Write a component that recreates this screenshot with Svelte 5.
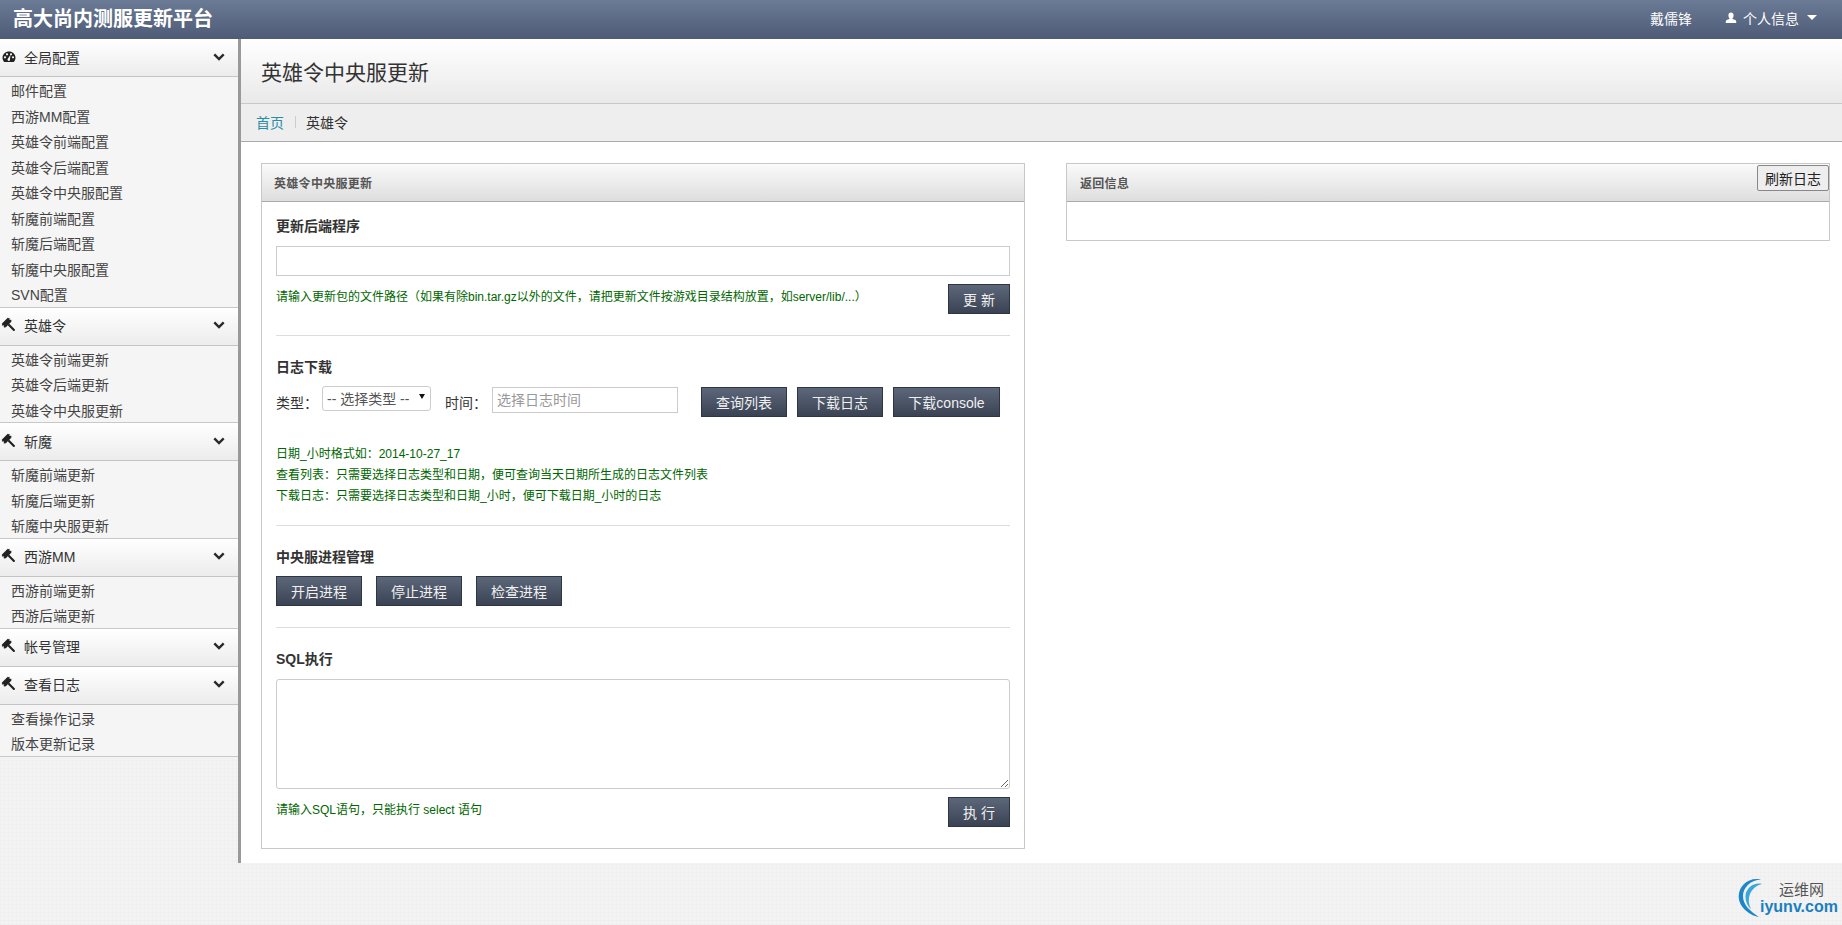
<script>
	const groups = [
		{ title: '全局配置', icon: 'dash', items: ['邮件配置', '西游MM配置', '英雄令前端配置', '英雄令后端配置', '英雄令中央服配置', '斩魔前端配置', '斩魔后端配置', '斩魔中央服配置', 'SVN配置'] },
		{ title: '英雄令', icon: 'gavel', items: ['英雄令前端更新', '英雄令后端更新', '英雄令中央服更新'] },
		{ title: '斩魔', icon: 'gavel', items: ['斩魔前端更新', '斩魔后端更新', '斩魔中央服更新'] },
		{ title: '西游MM', icon: 'gavel', items: ['西游前端更新', '西游后端更新'] },
		{ title: '帐号管理', icon: 'gavel', items: [] },
		{ title: '查看日志', icon: 'gavel', items: ['查看操作记录', '版本更新记录'] }
	];
</script>

<div class="page">
	<header class="topbar">
		<div class="brand">高大尚内测服更新平台</div>
		<div class="user">
			<span class="uname">戴儒锋</span>
			<span class="uinfo">
				<svg class="uicon" viewBox="0 0 12 12" width="12" height="12"><path d="M6 .5c1.600 0 2.600 1.200 2.600 2.900 0 1.200-.5 2.300-1.200 2.900.1.600.5.9 1.500 1.200 1.400.4 2.300.9 2.300 2v1.500H.8V9.500c0-1.100.9-1.600 2.300-2 1-.3 1.400-.6 1.500-1.200-.7-.6-1.200-1.700-1.200-2.900C3.400 1.700 4.400.5 6 .5z" fill="#fff"/></svg>
				个人信息
				<span class="caret"></span>
			</span>
		</div>
	</header>

	<div class="layout">
		<nav class="sidebar">
			{#each groups as g}
				<section class="group">
					<div class="group-head">
						{#if g.icon === 'dash'}
							<svg class="gicon" viewBox="0 0 14 14" width="14" height="14">
								<path fill-rule="evenodd" d="M7 1.500c3.500 0 6.500 2.700 6.500 6.200 0 1.700-.7 3.200-1.800 4.300H2.300C1.200 10.900.5 9.400.5 7.700.5 4.200 3.500 1.500 7 1.500zM3 6.200a1.100 1.100 0 1 0 0 2.200 1.100 1.100 0 0 0 0-2.200zM5 3.200a1.100 1.100 0 1 0 0 2.200 1.100 1.100 0 0 0 0-2.200zM9 3.200a1.100 1.100 0 1 0 0 2.200 1.100 1.100 0 0 0 0-2.200zM11 6.200a1.100 1.100 0 1 0 0 2.200 1.100 1.100 0 0 0 0-2.200zM8.500 4.800 6 8.600a1.300 1.300 0 1 0 2 .5z" fill="#222"/>
							</svg>
						{:else}
							<svg class="gicon" viewBox="0 0 14 14" width="14" height="14">
								<g transform="rotate(-45 7 7)" fill="#222">
									<rect x="2.800" y="1" width="8.400" height="5.400"/>
									<rect x="1.800" y="1.800" width="10.400" height="1.200"/>
									<rect x="1.800" y="4.400" width="10.400" height="1.200"/>
									<rect x="5.900" y="6" width="2.200" height="9" rx="1"/>
								</g>
							</svg>
						{/if}
						<span class="gtitle">{g.title}</span>
						<svg class="chev" viewBox="0 0 12 8" width="12" height="8"><path d="M1.300 1.300 6 6l4.700-4.700" fill="none" stroke="#2a2a2a" stroke-width="2.400"/></svg>
					</div>
					{#if g.items.length}
						<ul class="items">
							{#each g.items as item}
								<li>{item}</li>
							{/each}
						</ul>
					{/if}
				</section>
			{/each}
		</nav>

		<main class="main">
			<div class="title-bar"><h1>英雄令中央服更新</h1></div>
			<div class="crumbs">
				<span class="crumb-link">首页</span>
				<span class="crumb-sep"></span>
				<span>英雄令</span>
			</div>

			<div class="columns">
				<div class="panel">
					<div class="panel-head"><span>英雄令中央服更新</span></div>
					<div class="panel-body">
						<div class="block b-update">
							<h4>更新后端程序</h4>
							<input class="text wide" type="text" />
							<div class="hint-row">
								<p class="hint">请输入更新包的文件路径（如果有除bin.tar.gz以外的文件，请把更新文件按游戏目录结构放置，如server/lib/...）</p>
								<button class="btn small">更 新</button>
							</div>
						</div>

						<div class="block b-log">
							<h4>日志下载</h4>
							<div class="log-row">
								<span class="lbl">类型：</span>
								<span class="select-wrap">
									<select><option>-- 选择类型 --</option></select>
								</span>
								<span class="lbl time-lbl">时间：</span>
								<input class="text date" type="text" placeholder="选择日志时间" />
								<button class="btn list">查询列表</button>
								<button class="btn list">下载日志</button>
								<button class="btn console">下载console</button>
							</div>
							<div class="hints">
								<p>日期_小时格式如：2014-10-27_17</p>
								<p>查看列表：只需要选择日志类型和日期，便可查询当天日期所生成的日志文件列表</p>
								<p>下载日志：只需要选择日志类型和日期_小时，便可下载日期_小时的日志</p>
							</div>
						</div>

						<div class="block b-proc">
							<h4>中央服进程管理</h4>
							<div class="proc-row">
								<button class="btn list">开启进程</button>
								<button class="btn list">停止进程</button>
								<button class="btn list">检查进程</button>
							</div>
						</div>

						<div class="block b-sql">
							<h4>SQL执行</h4>
							<textarea></textarea>
							<div class="hint-row">
								<p class="hint">请输入SQL语句，只能执行 select 语句</p>
								<button class="btn small">执 行</button>
							</div>
						</div>
					</div>
				</div>

				<div class="panel right">
					<div class="panel-head">
						<span>返回信息</span>
						<button class="refresh">刷新日志</button>
					</div>
					<div class="panel-body empty"></div>
				</div>
			</div>
		</main>
	</div>

	<div class="logo">
		<svg viewBox="0 0 44 42" width="44" height="42">
			<path d="M23 1.500C10 -1 1 8 .7 18c-.2 10 9.300 19 20.300 21C12 33 5 27 5 18 5 10 12 2 23 1.500z" fill="#1e86c6"/>
			<path d="M24 6C16 4 8 10 7.500 18c-.2 5 2 10 5.500 13-2.500-5-3-10-1-15 2-5 7-9 12-10z" fill="#38a8dc"/>
		</svg>
		<span class="logo-cn">运维网</span>
		<span class="logo-en">iyunv.com</span>
	</div>
</div>

<style>
	:global(body) {
		margin: 0;
		font-family: "Liberation Sans", "Noto Sans CJK SC", sans-serif;
		font-size: 14px;
		color: #333;
		background-color: #f3f3f3;
		background-image:
			repeating-linear-gradient(0deg, rgba(0, 0, 0, 0.012) 0 1px, transparent 1px 4px),
			repeating-linear-gradient(90deg, rgba(0, 0, 0, 0.012) 0 1px, transparent 1px 4px);
	}

	.page {
		position: relative;
		height: 925px;
		overflow: hidden;
	}

	.topbar {
		height: 39px;
		display: flex;
		align-items: center;
		justify-content: space-between;
		padding: 0 25px 4px 13px;
		box-sizing: border-box;
		background: linear-gradient(#6b7a95, #4d5b77);
		color: #fff;
	}

	.brand {
		font-size: 20px;
		font-weight: 700;
	}

	.user {
		display: flex;
		align-items: center;
		font-size: 14px;
	}

	.uname {
		margin-right: 33px;
	}

	.uinfo {
		display: flex;
		align-items: center;
	}

	.uicon {
		margin-right: 6px;
	}

	.caret {
		width: 0;
		height: 0;
		margin-left: 8px;
		border-left: 5px solid transparent;
		border-right: 5px solid transparent;
		border-top: 5px solid #fff;
	}

	.layout {
		display: flex;
		height: 824px;
	}

	.sidebar {
		width: 238px;
		flex: none;
		border-right: 3px solid #999;
	}

	.group {
		background: #f5f5f5;
	}

	.group-head {
		height: 38px;
		box-sizing: border-box;
		display: flex;
		align-items: center;
		padding: 0 13px 2px 2px;
		background: linear-gradient(#fff, #ececec);
		border-bottom: 1px solid #c4c4c4;
	}

	.gicon {
		flex: none;
		margin-right: 8px;
		overflow: visible;
	}

	.gtitle {
		flex: 1;
		color: #333;
	}

	.items {
		list-style: none;
		margin: 0;
		padding: 0 0 0 11px;
		border-bottom: 1px solid #c8c8c8;
	}

	.items li {
		height: 25.5px;
		line-height: 28px;
		color: #444;
	}

	.main {
		flex: 1;
		min-width: 0;
		background: #fff;
		display: flex;
		flex-direction: column;
	}

	.title-bar {
		height: 65px;
		box-sizing: border-box;
		padding-left: 20px;
		display: flex;
		align-items: center;
		background: linear-gradient(#fff, #e9e9e9);
		border-bottom: 1px solid #c8c8c8;
	}

	h1 {
		margin: 0;
		font-size: 21px;
		font-weight: 400;
		color: #333;
	}

	.crumbs {
		height: 38px;
		box-sizing: border-box;
		padding: 0 0 1px 15px;
		display: flex;
		align-items: center;
		background: #eee;
		border-bottom: 1px solid #aaa;
		color: #333;
	}

	.crumb-link {
		color: #2a8ca8;
	}

	.crumb-sep {
		width: 1px;
		height: 12px;
		background: #ccc;
		margin: 0 10px 0 11px;
	}

	.columns {
		display: flex;
		align-items: flex-start;
		padding: 21px 12px 0 20px;
		gap: 41px;
	}

	.panel {
		flex: 1;
		min-width: 0;
		border: 1px solid #c8c8c8;
		box-sizing: border-box;
	}

	.panel-head {
		position: relative;
		height: 38px;
		box-sizing: border-box;
		display: flex;
		align-items: center;
		padding-left: 12px;
		font-size: 12px;
		letter-spacing: 0.3px;
		font-weight: 700;
		color: #555;
		background: linear-gradient(#fafafa, #dedede);
		border-bottom: 1px solid #aaa;
	}

	.right .panel-head {
		padding-left: 13px;
	}

	.panel-body {
		padding: 0 14px;
		height: 646px;
		box-sizing: border-box;
	}

	.panel-body.empty {
		height: 38px;
	}

	.refresh {
		position: absolute;
		top: 1px;
		right: 0;
		width: 72px;
		height: 26px;
		padding: 0;
		font: 14px "Liberation Sans", "Noto Sans CJK SC", sans-serif;
		color: #222;
		background: #eee;
		border: 1px solid #888;
		border-radius: 2px;
	}

	.block {
		box-sizing: border-box;
		border-bottom: 1px solid #ddd;
	}

	.block:last-child {
		border-bottom: 0;
	}

	.b-update { height: 134px; padding-top: 14px; }
	.b-log { height: 190px; padding-top: 21px; }
	.b-proc { height: 102px; padding-top: 21px; }
	.b-sql { padding-top: 21px; }

	h4 {
		margin: 0;
		font-size: 14px;
		line-height: 20px;
		font-weight: 700;
		color: #333;
	}

	.text {
		box-sizing: border-box;
		border: 1px solid #ccc;
		background: #fff;
		outline: none;
		font: inherit;
	}

	.wide {
		display: block;
		width: 100%;
		height: 30px;
		margin-top: 10px;
	}

	.hint-row {
		display: flex;
		justify-content: space-between;
		align-items: flex-start;
		margin-top: 8px;
	}

	.hint {
		margin: 0;
		padding-top: 3px;
		font-size: 12px;
		line-height: 20px;
		color: #060;
	}

	.btn {
		box-sizing: border-box;
		height: 30px;
		padding: 0;
		font: 14px "Liberation Sans", "Noto Sans CJK SC", sans-serif;
		color: #f0f0f0;
		background: linear-gradient(#5c6779, #3a4354);
		border: 1px solid #2e3644;
	}

	.btn.small {
		width: 62px;
		flex: none;
	}

	.btn.list {
		width: 86px;
	}

	.btn.console {
		width: 107px;
	}

	.log-row {
		display: flex;
		align-items: flex-start;
		margin-top: 10px;
	}

	.lbl {
		line-height: 32px;
		width: 47px;
		flex: none;
	}

	.select-wrap {
		position: relative;
		display: block;
		width: 109px;
		height: 25px;
		flex: none;
		margin: -1px 0 0 -1px;
	}

	.select-wrap::after {
		content: "";
		position: absolute;
		right: 6px;
		top: 8px;
		border-left: 3.500px solid transparent;
		border-right: 3.500px solid transparent;
		border-top: 5px solid #111;
	}

	select {
		appearance: none;
		width: 100%;
		height: 100%;
		padding: 0 0 0 4px;
		font: inherit;
		color: #555;
		background: #fff;
		border: 1px solid #ccc;
		border-radius: 3px;
		outline: none;
	}

	.time-lbl {
		margin-left: 14px;
	}

	.date {
		width: 186px;
		height: 26px;
		padding: 0 4px;
		flex: none;
		margin-right: 23px;
	}

	.date::placeholder {
		color: #999;
		opacity: 1;
	}

	.log-row .btn + .btn {
		margin-left: 10px;
	}

	.hints {
		margin-top: 25px;
		font-size: 12px;
		color: #060;
	}

	.hints p {
		margin: 0;
		line-height: 21px;
	}

	.proc-row {
		display: flex;
		gap: 14px;
		margin-top: 9px;
	}

	textarea {
		display: block;
		box-sizing: border-box;
		width: 100%;
		height: 110px;
		margin-top: 10px;
		border: 1px solid #ccc;
		border-radius: 3px;
		outline: none;
	}

	.logo {
		position: absolute;
		left: 1738px;
		top: 878px;
		width: 100px;
		height: 42px;
	}

	.logo svg {
		position: absolute;
		left: 0;
		top: 0;
		overflow: visible;
	}

	.logo-cn {
		position: absolute;
		left: 41px;
		top: 2px;
		font-size: 15px;
		line-height: 20px;
		color: #555;
	}

	.logo-en {
		position: absolute;
		left: 22px;
		top: 19px;
		font-size: 16px;
		line-height: 20px;
		font-weight: 700;
		color: #1a7fc0;
	}
</style>
